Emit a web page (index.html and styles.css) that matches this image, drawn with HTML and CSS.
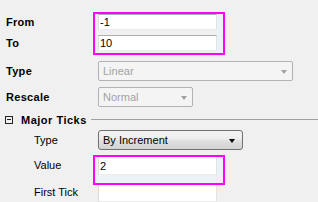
FILE: index.html
```html
<!DOCTYPE html>
<html>
<head>
<meta charset="utf-8">
<link rel="stylesheet" href="styles.css">
</head>
<body>
<div class="panel">
  <div class="row r-from"><span class="label bold">From</span><div class="input">-1</div></div>
  <div class="row r-to"><span class="label bold">To</span><div class="input">10</div></div>
  <div class="row r-type"><span class="label bold">Type</span><div class="select disabled wide">Linear<span class="arrow"></span></div></div>
  <div class="row r-rescale"><span class="label bold">Rescale</span><div class="select disabled narrow">Normal<span class="arrow"></span></div></div>
  <div class="group"><span class="toggle"></span><span class="group-title">Major Ticks</span><span class="rule"></span></div>
  <div class="row sub r-type2"><span class="label">Type</span><div class="select enabled mid">By Increment<span class="arrow"></span></div></div>
  <div class="row sub r-value"><span class="label">Value</span><div class="input tall">2</div></div>
  <div class="row sub r-first"><span class="label">First Tick</span><div class="input tall"></div></div>
  <div class="highlight h1"></div>
  <div class="highlight h2"></div>
</div>
</body>
</html>
```
FILE: styles.css
```css
html, body {
  margin: 0;
  padding: 0;
  background: #f0f0f0;
}
body {
  width: 318px;
  height: 202px;
  overflow: hidden;
  font-family: "Liberation Sans", Arial, sans-serif;
  font-size: 11px;
  color: #000;
}
.panel {
  position: relative;
  display: flex;
  flex-direction: column;
  width: 318px;
  height: 202px;
}
.row {
  display: flex;
  align-items: center;
  flex: none;
}
.label {
  box-sizing: border-box;
  width: 98px;
  padding-left: 6px;
  line-height: 13px;
}
.sub .label {
  padding-left: 34px;
}
.bold {
  font-weight: bold;
  letter-spacing: 0.3px;
}
.r-from { margin-top: 14px; height: 16px; }
.r-to { margin-top: 5px; height: 16px; }
.r-type { margin-top: 10px; height: 20px; }
.r-rescale { margin-top: 6px; height: 20px; }
.group { margin-top: 5px; height: 18px; }
.r-type2 { margin-top: 3px; height: 20px; }
.r-value { margin-top: 6px; height: 19px; }
.r-first { margin-top: 8px; height: 19px; }

.input {
  box-sizing: border-box;
  width: 119px;
  height: 100%;
  background: #fff;
  border: 1px solid;
  border-color: #abadb3 #e3e3e3 #ececec #dadada;
  padding-left: 1px;
  display: flex;
  align-items: center;
}
.select {
  box-sizing: border-box;
  height: 20px;
  position: relative;
  display: flex;
  align-items: center;
  padding-left: 4px;
}
.wide { width: 195px; }
.narrow { width: 95px; }
.mid { width: 145px; }
.disabled {
  background: #f4f4f4;
  border: 1px solid #b2b2b2;
  border-radius: 2px;
  color: #a3a3a3;
}
.enabled {
  background: linear-gradient(#f4f4f4 0%, #ececec 45%, #dfdfdf 55%, #d2d2d2 100%);
  border: 1px solid #707070;
  border-radius: 3px;
  color: #000;
}
.arrow {
  position: absolute;
  right: 5px;
  top: 8px;
  width: 0;
  height: 0;
  border-left: 3.5px solid transparent;
  border-right: 3.5px solid transparent;
  border-top: 4px solid #a0a0a0;
}
.enabled .arrow {
  right: 7px;
  border-top-color: #000;
}
.group {
  display: flex;
  align-items: center;
}
.toggle {
  box-sizing: border-box;
  margin-left: 5px;
  width: 8px;
  height: 8px;
  border: 1px solid #222;
  position: relative;
  flex: none;
}
.toggle::after {
  content: "";
  position: absolute;
  left: 1px;
  right: 1px;
  top: 2.5px;
  height: 1px;
  background: #222;
}
.group-title {
  margin-left: 8px;
  font-weight: bold;
  letter-spacing: 0.5px;
}
.rule {
  flex: 1;
  height: 1px;
  background: #a0a0a0;
  margin-left: 4px;
  margin-top: -1px;
}
.highlight {
  position: absolute;
  box-sizing: border-box;
  border: 2px solid #ff00ff;
  left: 93px;
  width: 132px;
}
.h1 { top: 12px; height: 43px; }
.h2 { top: 155px; height: 30px; }
```
